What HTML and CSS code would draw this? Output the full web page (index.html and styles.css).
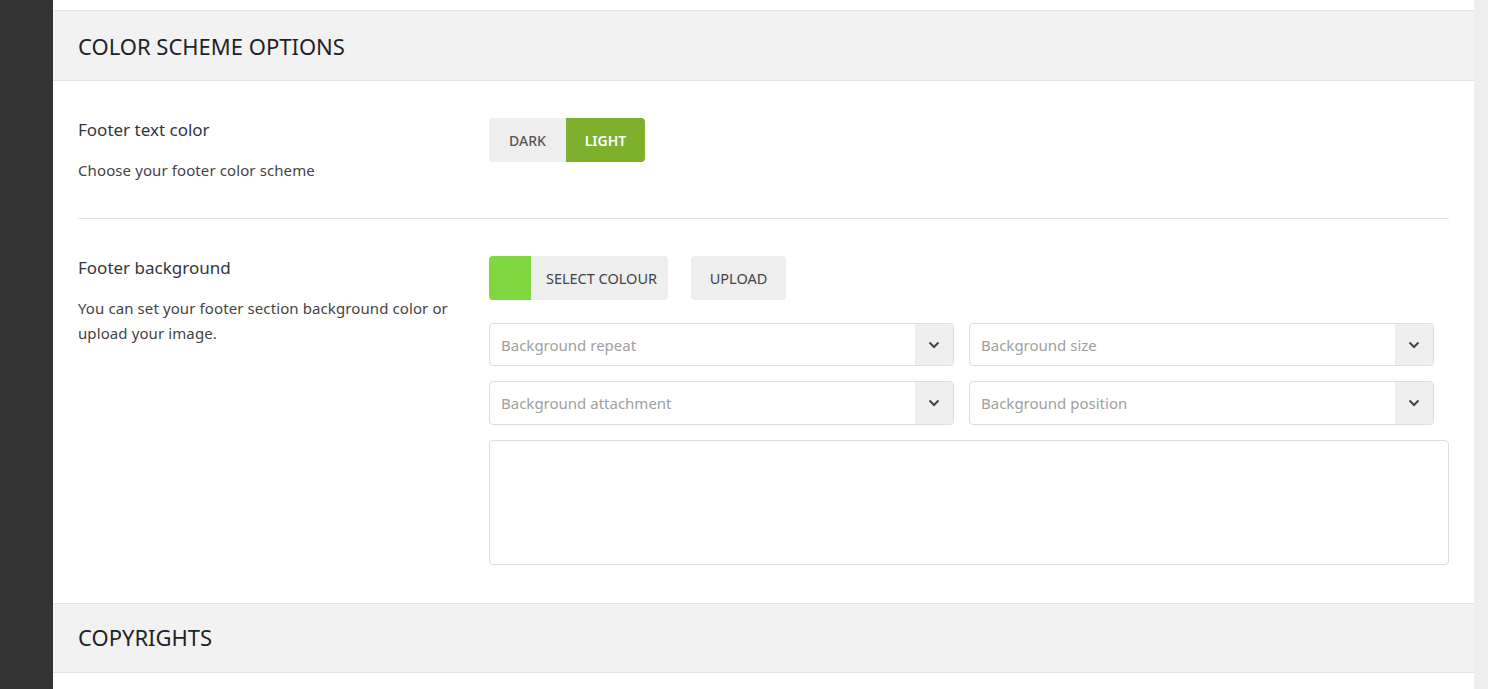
FILE: index.html
```html
<!DOCTYPE html>
<html>
<head>
<meta charset="utf-8">
<link rel="stylesheet" href="styles.css">
</head>
<body>
<div class="page">
  <aside class="sidebar"></aside>
  <main class="panel">
    <div class="top-gap"></div>
    <section class="section">
      <header class="section-head"><h2>COLOR SCHEME OPTIONS</h2></header>
      <div class="section-body">
        <div class="row">
          <div class="label-col">
            <h3 class="label">Footer text color</h3>
            <p class="desc">Choose your footer color scheme</p>
          </div>
          <div class="field-col">
            <div class="toggle">
              <button class="toggle-btn">DARK</button>
              <button class="toggle-btn active">LIGHT</button>
            </div>
          </div>
        </div>
        <div class="row last">
          <div class="label-col">
            <h3 class="label">Footer background</h3>
            <p class="desc">You can set your footer section background color or upload your image.</p>
          </div>
          <div class="field-col">
            <div class="btn-row">
              <button class="btn color-btn"><span class="swatch"></span><span class="btn-text">SELECT COLOUR</span></button>
              <button class="btn upload-btn">UPLOAD</button>
            </div>
            <div class="select-grid">
              <div class="select"><span class="placeholder">Background repeat</span><span class="arrow"><svg width="12" height="8" viewBox="0 0 12 8"><path d="M1.5 1.5 L6 6 L10.5 1.5" fill="none" stroke="#444" stroke-width="2"/></svg></span></div>
              <div class="select"><span class="placeholder">Background size</span><span class="arrow"><svg width="12" height="8" viewBox="0 0 12 8"><path d="M1.5 1.5 L6 6 L10.5 1.5" fill="none" stroke="#444" stroke-width="2"/></svg></span></div>
              <div class="select"><span class="placeholder">Background attachment</span><span class="arrow"><svg width="12" height="8" viewBox="0 0 12 8"><path d="M1.5 1.5 L6 6 L10.5 1.5" fill="none" stroke="#444" stroke-width="2"/></svg></span></div>
              <div class="select"><span class="placeholder">Background position</span><span class="arrow"><svg width="12" height="8" viewBox="0 0 12 8"><path d="M1.5 1.5 L6 6 L10.5 1.5" fill="none" stroke="#444" stroke-width="2"/></svg></span></div>
            </div>
            <div class="textarea"></div>
          </div>
        </div>
      </div>
    </section>
    <section class="section">
      <header class="section-head short"><h2>COPYRIGHTS</h2></header>
      <div class="section-body empty"></div>
    </section>
  </main>
  <div class="rail"></div>
</div>
</body>
</html>
```

FILE: styles.css
```css
* { box-sizing: border-box; }
html, body { margin: 0; padding: 0; height: 100%; overflow: hidden; }
body {
  font-family: "Noto Sans", "Open Sans", sans-serif;
  background: #eeeeee;
  color: #333;
}
.page {
  display: flex;
  height: 689px;
}
.sidebar {
  width: 53px;
  flex: none;
  background: #333333;
}
.panel {
  width: 1421px;
  flex: none;
  background: #fff;
}
.rail {
  flex: 1;
  background: #eeeeee;
}
.top-gap { height: 10px; }
.section-head {
  height: 71px;
  background: #f2f2f2;
  border-top: 1px solid #e2e2e2;
  border-bottom: 1px solid #e2e2e2;
  display: flex;
  align-items: center;
  padding: 0 25px;
}
.section-head.short { height: 70px; padding-bottom: 2px; }
.section-head h2 {
  margin: 0;
  font-size: 22px;
  font-weight: 400;
  color: #1e2327;
}
.section-body {
  padding: 0 25px;
}
.section-body.empty { height: 40px; }
.row {
  display: flex;
  padding: 37px 0 35px;
  border-bottom: 1px solid #e5e5e5;
}
.row.last {
  border-bottom: none;
  padding-bottom: 38px;
}
.label-col {
  width: 411px;
  flex: none;
}
.label {
  margin: 0;
  font-size: 17px;
  font-weight: 400;
  line-height: 24px;
  color: #32373c;
}
.desc {
  margin: 16px 0 0;
  font-size: 15px;
  line-height: 25px;
  letter-spacing: 0.1px;
  color: #444;
  max-width: 385px;
}
.field-col {
  flex: 1;
  min-width: 0;
}
.toggle {
  display: inline-flex;
  border-radius: 4px;
  overflow: hidden;
}
.toggle-btn {
  border: none;
  height: 44px;
  padding: 0;
  width: 77px;
  background: #eeeeee;
  font-family: inherit;
  font-size: 14px;
  font-weight: 500;
  color: #555;
}
.toggle-btn.active {
  width: 79px;
  background: #7db02c;
  color: #fff;
  font-weight: 600;
}
.btn-row {
  display: flex;
  gap: 23px;
  margin-bottom: 23px;
}
.btn {
  border: none;
  height: 44px;
  border-radius: 4px;
  background: #eeeeee;
  font-family: inherit;
  font-size: 14.5px;
  font-weight: 400;
  color: #444;
  padding: 0;
  display: flex;
  align-items: center;
}
.color-btn {
  width: 179px;
  overflow: hidden;
}
.swatch {
  width: 42px;
  height: 44px;
  background: #80d841;
  flex: none;
}
.btn-text {
  flex: 1;
  text-align: center;
  padding-left: 4px;
}
.upload-btn {
  width: 95px;
  justify-content: center;
}
.select-grid {
  display: grid;
  grid-template-columns: 465px 465px;
  column-gap: 15px;
  row-gap: 15px;
  margin-bottom: 15px;
}
.select {
  height: 43px;
  border: 1px solid #dedede;
  border-radius: 4px;
  display: flex;
  align-items: center;
  overflow: hidden;
}
.select + .select + .select { height: 44px; }
.placeholder {
  flex: 1;
  padding-left: 11px;
  font-size: 15px;
  color: #a0a0a0;
}
.arrow {
  width: 38px;
  height: 100%;
  background: #efefef;
  display: flex;
  align-items: center;
  justify-content: center;
}
.textarea {
  height: 125px;
  border: 1px solid #dedede;
  border-radius: 4px;
}
```
